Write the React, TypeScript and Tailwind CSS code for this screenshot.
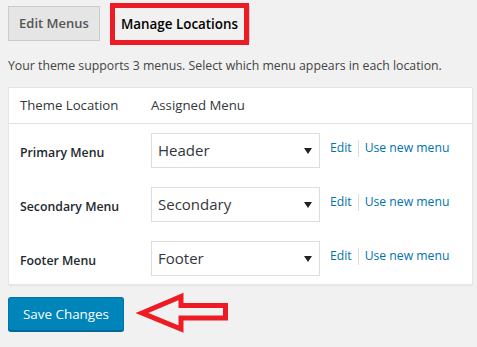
import React from "react";

const rows = [
  { label: "Primary Menu", value: "Header" },
  { label: "Secondary Menu", value: "Secondary" },
  { label: "Footer Menu", value: "Footer" },
];

export default function App() {
  return (
    <div className="h-[347px] w-[477px] overflow-hidden bg-[#f1f1f1] pl-2 font-['Open_Sans',sans-serif] text-[#444]">
      {/* tabs */}
      <div className="flex items-start">
        <div className="mt-[6px] flex h-[35px] w-[92px] items-center justify-center border border-[#ccc] bg-[#e5e5e5] text-[13px] font-semibold text-[#555]">
          Edit Menus
        </div>
        <div className="ml-[10px] mt-[3px] flex h-[42px] w-[139px] items-center justify-center border-[5px] border-[#ed1c24] bg-[#f1f1f1] text-[13.4px] font-semibold text-[#000]">
          Manage Locations
        </div>
        <div className="mt-[6px] h-[36px] w-px bg-[#ccc]" />
      </div>

      <p className="mt-[12px] text-[12.3px] leading-[18px] text-[#444]">
        Your theme supports 3 menus. Select which menu appears in each location.
      </p>

      {/* table */}
      <div className="mt-[12px] w-[465px] border border-[#e5e5e5] bg-white shadow-[0_1px_1px_rgba(0,0,0,0.04)]">
        <div className="flex h-[36px] items-center border-b border-[#e1e1e1] text-[13.2px] text-[#32373c]">
          <div className="w-[142px] pl-[11px]">Theme Location</div>
          <div>Assigned Menu</div>
        </div>
        <div className="pb-[8px] pt-[9px]">
          {rows.map((r, i) => (
            <div key={r.label} className={`flex items-center ${i > 0 ? "mt-[19px]" : ""}`}>
              <div className="mt-[5px] w-[142px] pl-[11px] text-[12.3px] font-semibold text-[#23282d]">{r.label}</div>
              <div className="flex h-[35px] w-[169px] items-center justify-between border border-[#ddd] bg-white pl-[6px] pr-[7px] text-[15px] text-[#32373c]">
                <span>{r.value}</span>
                <svg width="8" height="6" viewBox="0 0 8 6">
                  <path d="M0 0h8L4 6z" fill="#222" />
                </svg>
              </div>
              <div className="-mt-[4px] ml-[10px] flex items-center text-[12.2px] text-[#0073aa]">
                <span>Edit</span>
                <span className="mx-[6px] h-[17px] w-px bg-[#ddd]" />
                <span>Use new menu</span>
              </div>
            </div>
          ))}
        </div>
      </div>

      {/* save */}
      <div className="mt-[12px] flex items-start">
        <button className="flex h-[34px] w-[116px] items-center justify-center rounded-[3px] border border-[#0073aa] border-b-[#006799] bg-[#0085ba] text-[13.4px] text-white shadow-[0_1px_0_#006799]">
          Save Changes
        </button>
        <svg className="-mt-[7px] ml-[12px]" width="96" height="45" viewBox="0 0 96 45">
          <polygon
            points="6,23 45,6.5 45,15.5 89.5,15.5 89.5,28 45,28 45,39"
            fill="none"
            stroke="#ed1c24"
            strokeWidth="5"
            strokeLinejoin="miter"
          />
        </svg>
      </div>
    </div>
  );
}
